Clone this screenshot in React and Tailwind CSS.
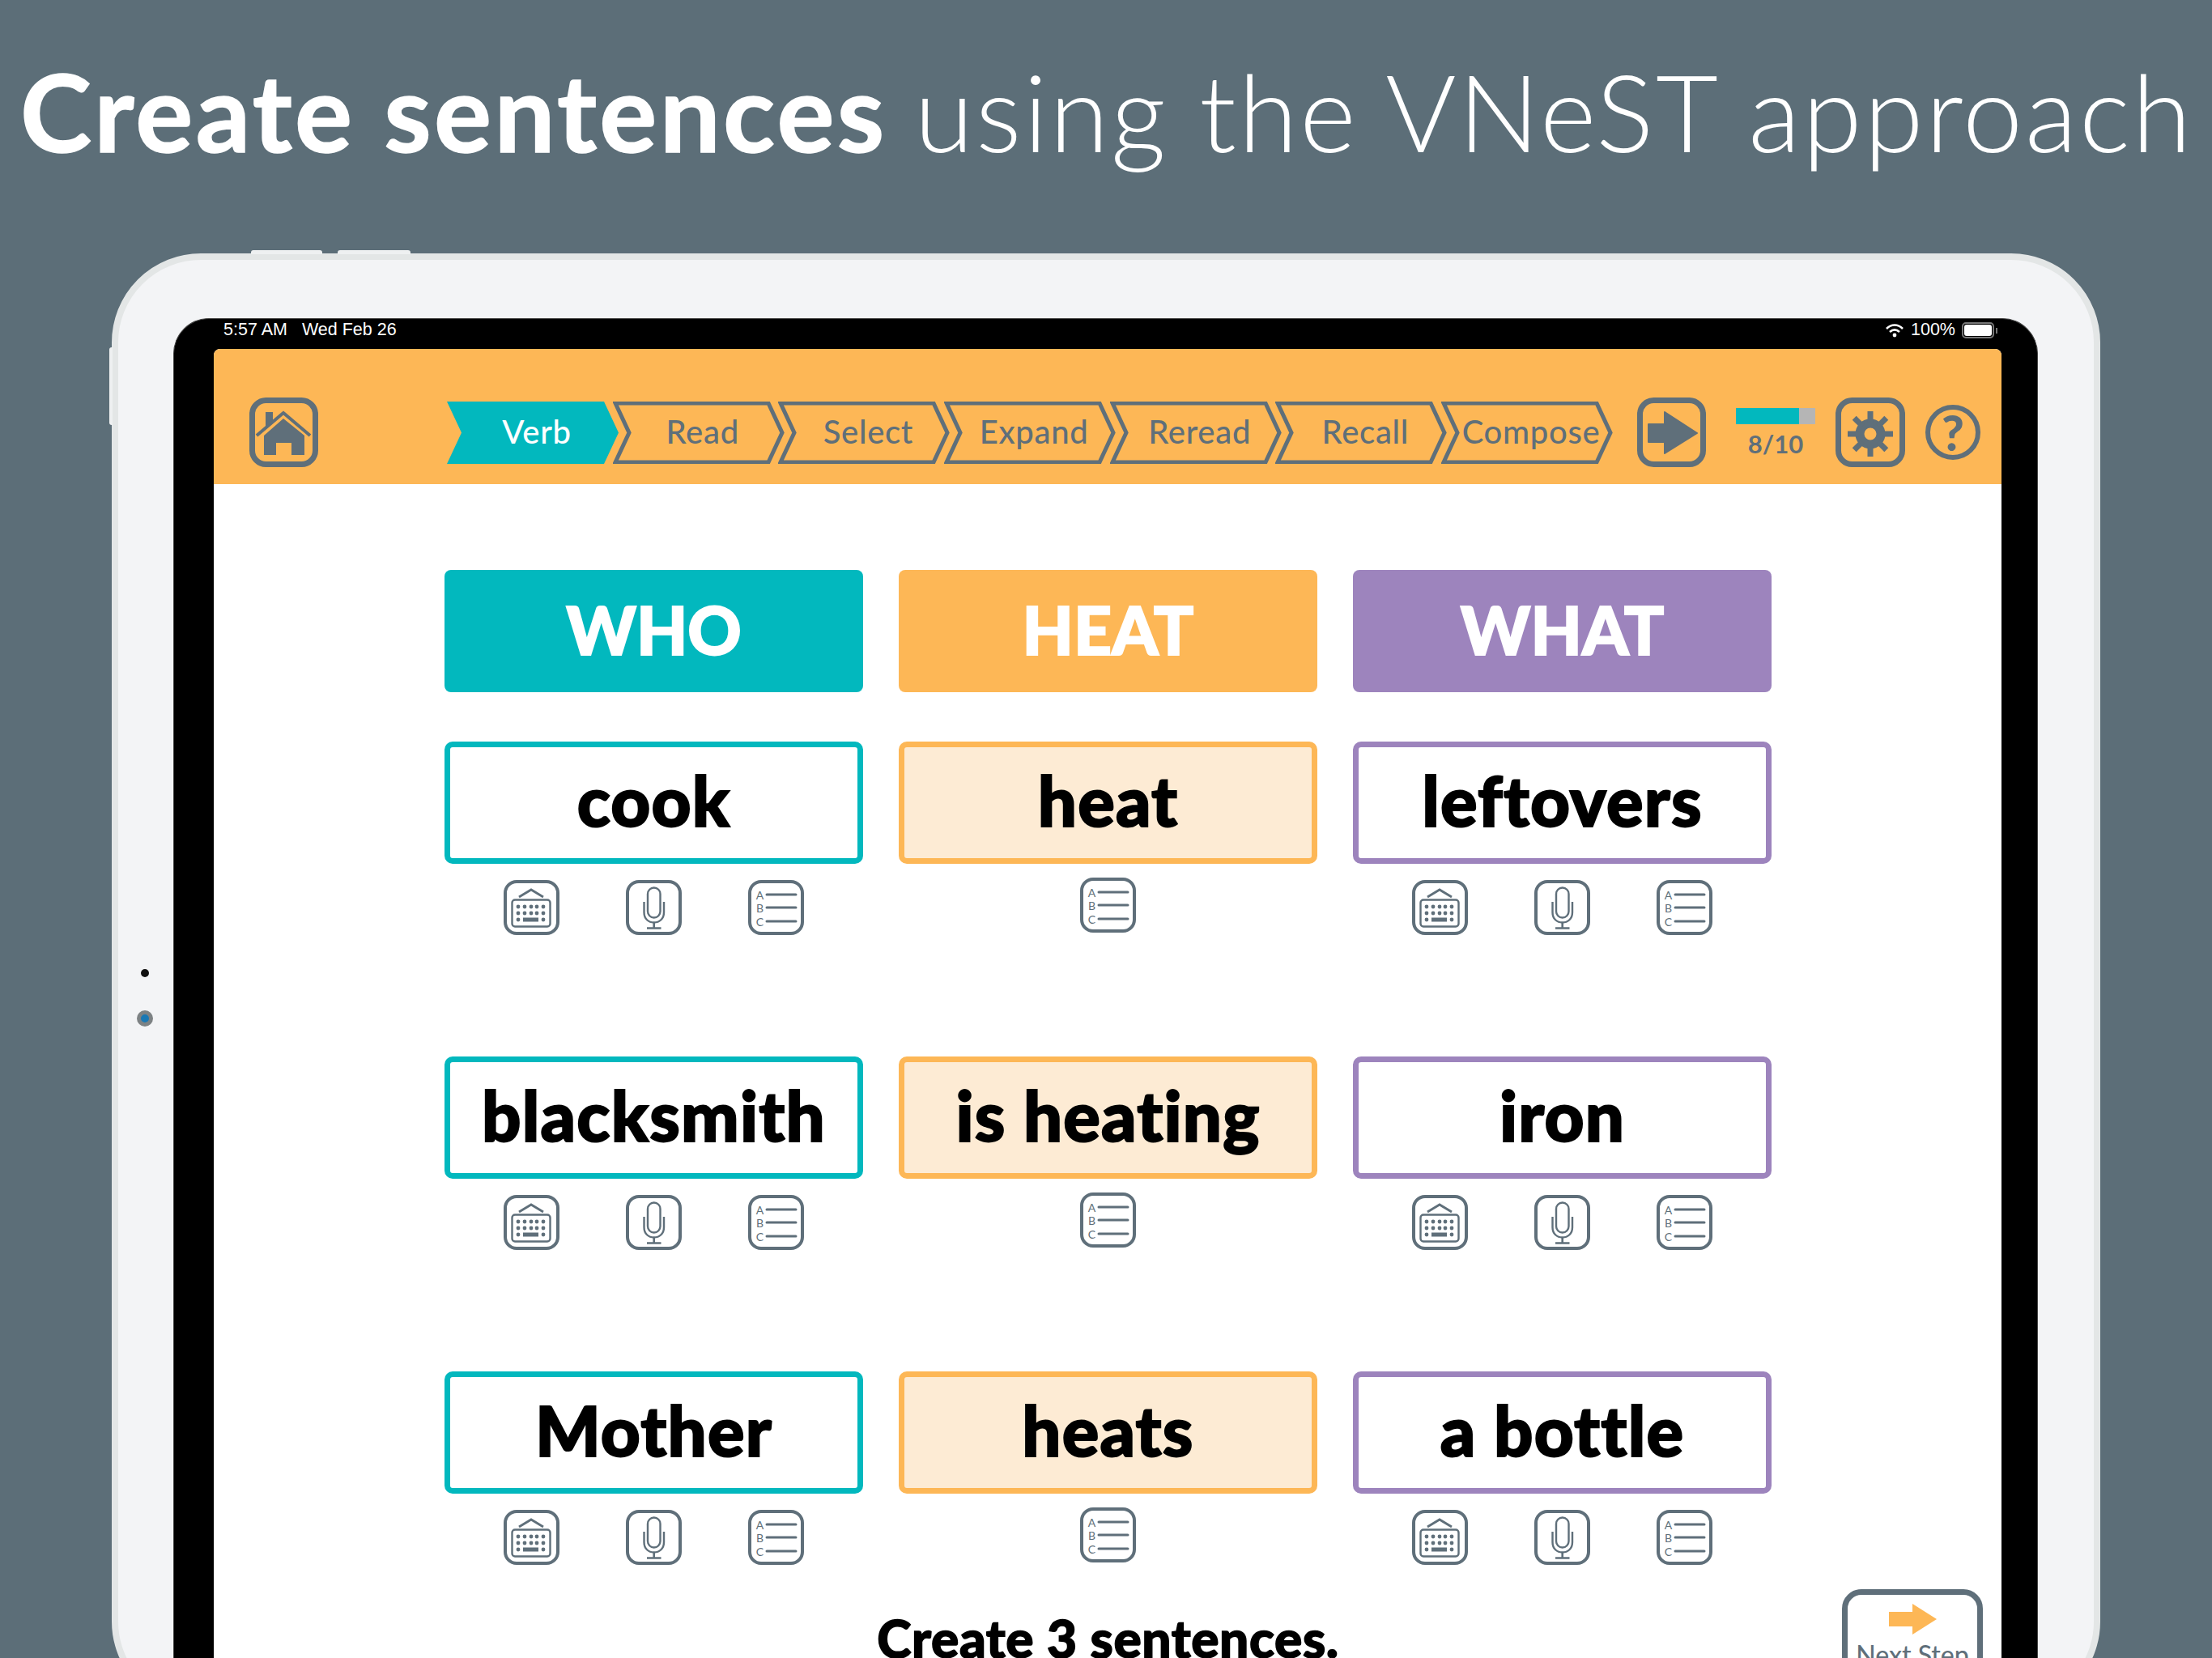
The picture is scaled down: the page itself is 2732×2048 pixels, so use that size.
import React from "react";

const SLATE = "#5f6f7a";

function IconFrame({ children }) {
  return (
    <svg width="69" height="68" viewBox="0 0 69 68" fill="none" stroke={SLATE}>
      <rect x="2" y="2" width="65" height="64" rx="14" strokeWidth="4" />
      {children}
    </svg>
  );
}

function KeyboardIcon() {
  const xs = [18, 26, 34, 41, 49];
  return (
    <IconFrame>
      <path d="M19 21 L34 12 L49 21" strokeWidth="2.8" />
      <rect x="10.5" y="24.5" width="47" height="33" rx="3.5" strokeWidth="2.4" />
      {xs.map((x) => (
        <circle key={`a${x}`} cx={x} cy="33" r="2.4" fill={SLATE} stroke="none" />
      ))}
      {xs.map((x) => (
        <circle key={`b${x}`} cx={x} cy="41" r="2.4" fill={SLATE} stroke="none" />
      ))}
      <circle cx="18" cy="49" r="2.4" fill={SLATE} stroke="none" />
      <rect x="24" y="46.5" width="19" height="5" fill={SLATE} stroke="none" />
      <circle cx="49" cy="49" r="2.4" fill={SLATE} stroke="none" />
    </IconFrame>
  );
}

function MicIcon() {
  return (
    <IconFrame>
      <rect x="27" y="9.5" width="15.5" height="37" rx="7.7" strokeWidth="2.4" />
      <path d="M22.5 27 V40 C22.5 48 28 52.5 34.7 52.5 C41.4 52.5 47 48 47 40 V27" strokeWidth="2.4" />
      <path d="M34.7 52.5 V59 M26 59.5 H43.5" strokeWidth="2.6" />
    </IconFrame>
  );
}

function ListIcon() {
  return (
    <IconFrame>
      <path d="M23 18 H59 M23 34 H59 M23 51 H59" strokeWidth="3" strokeLinecap="round" />
      <g fill={SLATE} stroke="none" fontSize="14" fontFamily="Lato, sans-serif" textAnchor="middle">
        <text x="14.5" y="24">A</text>
        <text x="14.5" y="40">B</text>
        <text x="14.5" y="57">C</text>
      </g>
    </IconFrame>
  );
}

function HomeIcon() {
  return (
    <svg width="85" height="86" viewBox="0 0 85 86" fill="none">
      <rect x="3.5" y="3.5" width="78" height="79" rx="17" stroke={SLATE} strokeWidth="7" />
      <path d="M9 47 L42 19 L75 47" stroke={SLATE} strokeWidth="4" />
      <path d="M20 18 H29 V28 L20 36 Z" fill={SLATE} />
      <path d="M42 26 L68 47 V71 H52 V56 H33 V71 H18 V47 Z" fill={SLATE} />
    </svg>
  );
}

function ArrowIcon() {
  return (
    <svg width="85" height="86" viewBox="0 0 85 86" fill="none">
      <rect x="3.5" y="3.5" width="78" height="79" rx="17" stroke={SLATE} strokeWidth="7" />
      <path d="M14 33 H34 V18 L74 44 L34 69 V55 H14 Z" fill={SLATE} stroke={SLATE} strokeWidth="2" strokeLinejoin="round" />
    </svg>
  );
}

function GearIcon() {
  const angles = [0, 45, 90, 135, 180, 225, 270, 315];
  return (
    <svg width="86" height="86" viewBox="0 0 86 86" fill="none">
      <rect x="3.5" y="3.5" width="79" height="79" rx="17" stroke={SLATE} strokeWidth="7" />
      <circle cx="43" cy="45" r="13" stroke={SLATE} strokeWidth="11" />
      {angles.map((a) => (
        <rect key={a} x="39.5" y="17" width="7" height="14" fill={SLATE} transform={`rotate(${a} 43 45)`} />
      ))}
    </svg>
  );
}

function Step({ label, active }) {
  return (
    <div className="relative w-[212px] h-[77px] -ml-[7.33px] first:ml-0 flex items-center justify-center pl-[10px]">
      <svg className="absolute inset-0" width="212" height="77" viewBox="0 0 212 77">
        {active ? (
          <path d="M0 0 H194 L212 38.5 L194 77 H0 L18 38.5 Z" fill="#02b8be" />
        ) : (
          <path d="M3 2 H192 L209 38.5 L192 75 H3 L20 38.5 Z" fill="none" stroke={SLATE} strokeWidth="5" />
        )}
      </svg>
      <span className={`relative pb-[2px] font-['Lato',sans-serif] text-[40px] font-medium leading-none tracking-[0.7px] ${active ? "text-white" : "text-[#5f6f7a]"}`}>
        {label}
      </span>
    </div>
  );
}

function Card({ text, kind }) {
  const cls = {
    who: "border-[#02b8be] bg-white",
    verb: "border-[#fdb756] bg-[#fdebd4]",
    what: "border-[#9d84bd] bg-white",
  }[kind];
  return (
    <div className="h-[389px] flex flex-col items-center">
      <div className={`w-full h-[151px] shrink-0 rounded-[10px] border-[7px] flex items-center justify-center font-['Lato',sans-serif] font-black text-black text-[85px] leading-none pb-[6px] tracking-[1.2px] [font-variant-ligatures:none] [-webkit-text-stroke:2px_#000] ${cls}`}>
        {text}
      </div>
      {kind === "verb" ? (
        <div className="mt-[17px]">
          <ListIcon />
        </div>
      ) : (
        <div className="mt-[20px] flex gap-[82px]">
          <KeyboardIcon />
          <MicIcon />
          <ListIcon />
        </div>
      )}
    </div>
  );
}

const HEADS = [
  { t: "WHO", c: "bg-[#02b8be]" },
  { t: "HEAT", c: "bg-[#fdb756]" },
  { t: "WHAT", c: "bg-[#9d84bd]" },
];

const ROWS = [
  ["cook", "heat", "leftovers"],
  ["blacksmith", "is heating", "iron"],
  ["Mother", "heats", "a bottle"],
];

export default function App() {
  return (
    <div className="relative w-[2732px] h-[2048px] overflow-hidden bg-[#5c6e78] flex flex-col">
      <h1 className="h-[313px] shrink-0 pl-[25px] pt-[62px] text-white font-['Lato',sans-serif] text-[133px] leading-[150px] whitespace-nowrap font-light tracking-[2.6px] [font-variant-ligatures:none]">
        <span className="font-bold tracking-[3.4px] mr-[-5px] [-webkit-text-stroke:1.5px_#fff]">Create sentences</span> using the VNeST approach
      </h1>

      <div className="relative ml-[138px] w-[2456px] h-[1800px] shrink-0 bg-[#f3f4f6] border-[8px] border-[#e3e6e6] rounded-[110px] pt-[72px] pl-[68px]">
        {/* hardware buttons on the top edge */}
        <div className="absolute -top-[12px] left-[164px] w-[88px] h-[5px] bg-[#eef0f1] rounded-t-[3px]" />
        <div className="absolute -top-[12px] left-[271px] w-[90px] h-[5px] bg-[#eef0f1] rounded-t-[3px]" />
        <div className="absolute -left-[11px] top-[108px] w-[4px] h-[96px] bg-[#eef0f1] rounded-l-[3px]" />
        {/* camera */}
        <div className="absolute left-[28px] top-[876px] w-[10px] h-[10px] rounded-full bg-[#111111]" />
        <div className="absolute left-[23px] top-[927px] w-[20px] h-[20px] rounded-full bg-[#1a78b4] border-[5px] border-[#7d8284]" />

        <div className="w-[2303px] h-[1700px] bg-black rounded-t-[44px] border-t-[1px] border-x-[1px] border-[#444444] px-[49px]">
          <div className="h-[37px] flex items-center justify-between pl-[12px] pb-[9px] text-white font-['Liberation_Sans',sans-serif] text-[21.5px] leading-none">
            <div className="flex gap-[18px]">
              <span>5:57 AM</span>
              <span>Wed Feb 26</span>
            </div>
            <div className="flex items-center gap-[8px]">
              <svg width="24" height="20" viewBox="0 0 24 20" fill="none" stroke="white" strokeWidth="2.6">
                <path d="M2 8 C8 2 16 2 22 8" />
                <path d="M6 12 C10 8.5 14 8.5 18 12" />
                <circle cx="12" cy="16" r="2.4" fill="white" stroke="none" />
              </svg>
              <span>100%</span>
              <div className="flex items-center gap-[2px]">
                <div className="w-[40px] h-[20px] rounded-[5px] border-[2px] border-[#777777] p-[1px]">
                  <div className="w-full h-full rounded-[3px] bg-white" />
                </div>
                <div className="w-[2px] h-[7px] bg-[#777777]" />
              </div>
            </div>
          </div>

          <div className="w-[2208px] h-[1660px] bg-white rounded-t-[8px] flex flex-col">
            <div className="h-[167px] shrink-0 bg-[#fdb756] rounded-t-[8px] flex items-center pl-[44px] pt-[39px]">
              <HomeIcon />
              <div className="ml-[159px] flex">
                <Step label="Verb" active />
                <Step label="Read" />
                <Step label="Select" />
                <Step label="Expand" />
                <Step label="Reread" />
                <Step label="Recall" />
                <Step label="Compose" />
              </div>
              <div className="ml-[30px]">
                <ArrowIcon />
              </div>
              <div className="ml-[37px] w-[98px] flex flex-col items-center">
                <div className="w-full h-[20px] bg-[#b5b5b5]">
                  <div className="w-[80%] h-full bg-[#02b8be]" />
                </div>
                <span className="mt-[9px] font-['Lato',sans-serif] font-bold text-[31px] leading-none text-[#5f6f7a]">8/10</span>
              </div>
              <div className="ml-[25px]">
                <GearIcon />
              </div>
              <div className="ml-[25px] w-[68px] h-[68px] rounded-full border-[6px] border-[#5f6f7a] flex items-center justify-center font-['Lato',sans-serif] font-black text-[60px] leading-none text-[#5f6f7a]">
                ?
              </div>
            </div>

            <div className="relative flex-1 pl-[285px] pt-[106px]">
              <div className="w-[1639px] grid grid-cols-3 gap-x-[44px]">
                {HEADS.map((h) => (
                  <div key={h.t} className={`h-[151px] rounded-[8px] flex items-center justify-center font-['Lato',sans-serif] font-black text-white text-[82px] leading-none mb-[61px] pb-[6px] [-webkit-text-stroke:2px_#fff] ${h.c}`}>
                    {h.t}
                  </div>
                ))}
                {ROWS.map((r) => (
                  <React.Fragment key={r[0]}>
                    <Card text={r[0]} kind="who" />
                    <Card text={r[1]} kind="verb" />
                    <Card text={r[2]} kind="what" />
                  </React.Fragment>
                ))}
              </div>
              <div className="w-[1639px] -mt-[91px] text-center font-['Lato',sans-serif] font-black text-black text-[64px] leading-none tracking-[0.6px] [-webkit-text-stroke:1.5px_#000]">
                Create 3 sentences.
              </div>
              <div className="absolute left-[2011px] top-[1365px] w-[174px] h-[140px] rounded-t-[24px] border-[7px] border-[#5f6f7a] bg-white flex flex-col items-center pt-[10px]">
                <svg width="61" height="40" viewBox="0 0 61 40">
                  <path d="M1 11 H30 V1 L60 20 L30 39 V29 H1 Z" fill="#fdb756" />
                </svg>
                <span className="mt-[8px] font-['Lato',sans-serif] font-medium text-[32px] leading-none text-[#5f6f7a] whitespace-nowrap">Next Step</span>
              </div>
            </div>
          </div>
        </div>
      </div>
    </div>
  );
}
